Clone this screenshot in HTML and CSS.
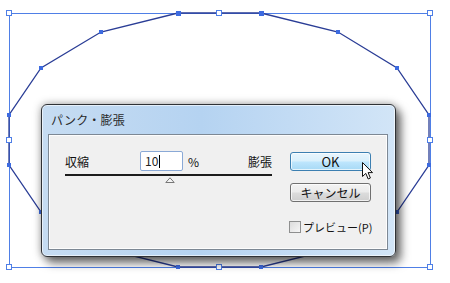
FILE: index.html
```html
<!DOCTYPE html>
<html>
<head>
	<title>パンク・膨張</title>
	<meta charset="utf-8">
	<link rel="stylesheet" href="styles.css">
</head>
<body>
<div class="canvas">
	<svg class="shape" width="450" height="283" viewBox="0 0 450 283">
		<rect x="9.5" y="13.5" width="421" height="254" fill="none" stroke="#4f7fe6" stroke-width="1"/>
		<polygon points="178,13 261,13 338,32 397,68 429,115 429,165 397,212 338,248 261,267 178,267 101,248 41,212 9,165 9,115 41,68 101,32" fill="none" stroke="#2a3d96" stroke-width="1.3"/>
		<g fill="#3d6be0">
			<rect x="176" y="11" width="5" height="5"/><rect x="259" y="11" width="5" height="5"/>
			<rect x="336" y="30" width="4" height="4"/><rect x="395" y="66" width="4" height="4"/>
			<rect x="427" y="113" width="4" height="4"/><rect x="427" y="163" width="4" height="4"/>
			<rect x="395" y="210" width="4" height="4"/><rect x="336" y="246" width="4" height="4"/>
			<rect x="259" y="265" width="4" height="4"/><rect x="176" y="265" width="4" height="4"/>
			<rect x="99" y="246" width="4" height="4"/><rect x="39" y="210" width="4" height="4"/>
			<rect x="7" y="163" width="4" height="4"/><rect x="7" y="113" width="4" height="4"/>
			<rect x="39" y="66" width="4" height="4"/><rect x="99" y="30" width="4" height="4"/>
		</g>
		<g fill="#fff" stroke="#4f7fe6" stroke-width="1">
			<rect x="6.5" y="10.5" width="5" height="5"/><rect x="216.5" y="10.5" width="5" height="5"/>
			<rect x="427.5" y="10.5" width="5" height="5"/><rect x="6.5" y="137.5" width="5" height="5"/>
			<rect x="427.5" y="137.5" width="5" height="5"/><rect x="6.5" y="264.5" width="5" height="5"/>
			<rect x="216.5" y="264.5" width="5" height="5"/><rect x="427.5" y="264.5" width="5" height="5"/>
		</g>
	</svg>

	<div class="dialog">
		<div class="title">パンク・膨張</div>
		<div class="panel">
			<div class="slider-area">
				<div class="value-row">
					<span class="label">収縮</span>
					<span class="input">10<span class="caret"></span></span>
					<span class="unit">%</span>
					<span class="label right">膨張</span>
				</div>
				<div class="track"></div>
				<svg class="thumb" width="10" height="6" viewBox="0 0 10 6">
					<polygon points="5,0.8 9.2,5.5 0.8,5.5" fill="#f4f4f4" stroke="#777" stroke-width="1"/>
				</svg>
			</div>
			<div class="buttons">
				<div class="btn ok">OK</div>
				<div class="btn">キャンセル</div>
				<label class="check"><span class="box"></span>プレビュー(P)</label>
			</div>
		</div>
	</div>

	<svg class="cursor" width="14" height="20" viewBox="0 0 14 20">
		<path d="M1.5 1.5 L1.5 15.5 L4.8 12.4 L7.2 18 L9.4 17 L7.1 11.6 L11.5 11.6 Z" fill="#fff" stroke="#111" stroke-width="1" stroke-linejoin="round"/>
	</svg>
</div>
</body>
</html>
```

FILE: styles.css
```css
*{
	margin: 0;
	padding: 0;
	box-sizing: border-box;
}
body{
	background: #fff;
	width: 450px;
	height: 283px;
	overflow: hidden;
	font-family: "Noto Sans CJK JP", "DejaVu Sans", sans-serif;
	font-size: 12px;
	color: #111;
}
.canvas{
	position: relative;
	width: 450px;
	height: 283px;
}
.shape{
	position: absolute;
	left: 0;
	top: 0;
}
/* ダイアログ本体 */
.dialog{
	position: absolute;
	left: 41px;
	top: 104px;
	width: 355px;
	height: 153px;
	border: 1px solid #2f3236;
	border-radius: 6px;
	background: linear-gradient(90deg, #c6dcf2 0%, #b5d3f1 45%, #c2dbf4 70%, #d2e5f7 100%);
	box-shadow: 5px 6px 10px rgba(0,0,0,0.55), 0 0 8px rgba(0,0,0,0.35), inset 0 0 0 1px rgba(255,255,255,0.6);
	padding: 0 7px 6px 6px;
	display: flex;
	flex-direction: column;
}
.title{
	height: 29px;
	line-height: 29px;
	padding-left: 3px;
	color: #2a2a2a;
	font-size: 12px;
	letter-spacing: 0.3px;
}
.panel{
	flex: 1;
	background: #f0f0f0;
	border: 1px solid #7d8894;
	box-shadow: inset 0 0 0 1px #fdfdfd;
	display: flex;
	padding: 16px 0 0 16px;
	gap: 18px;
}
.slider-area{
	width: 207px;
	position: relative;
}
.value-row{
	display: flex;
	align-items: center;
	height: 20px;
}
.label{
	width: 75px;
}
.label.right{
	width: auto;
	margin-left: auto;
}
.input{
	width: 43px;
	height: 20px;
	border: 1px solid #8aa9d6;
	border-radius: 2px;
	background: #fff;
	padding-left: 4px;
	line-height: 18px;
	color: #222;
	display: flex;
	align-items: center;
}
.caret{
	display: inline-block;
	width: 1px;
	height: 13px;
	background: #000;
	margin-left: 1px;
}
.unit{
	margin-left: 5px;
}
.track{
	margin-top: 3px;
	height: 2px;
	background: #1c1c1c;
}
.thumb{
	display: block;
	margin: 1px 0 0 100px;
}
.buttons{
	width: 81px;
	display: flex;
	flex-direction: column;
	padding-top: 1px;
}
.btn{
	height: 19px;
	border: 1px solid #707070;
	border-radius: 3px;
	text-align: center;
	line-height: 17px;
	background: linear-gradient(#f3f3f3 0%, #ebebeb 48%, #dcdcdc 52%, #cfcfcf 100%);
	box-shadow: inset 0 0 0 1px rgba(255,255,255,0.7);
	margin-bottom: 12px;
}
.btn.ok{
	border-color: #3c7fb1;
	background: linear-gradient(#e8f5fd 0%, #d9f0fc 48%, #bee6fd 52%, #a7d9f5 100%);
	font-size: 13px;
}
.check{
	display: flex;
	align-items: center;
	margin-top: 5px;
	margin-left: -1px;
	white-space: nowrap;
	font-size: 11px;
}
.box{
	flex-shrink: 0;
	width: 12px;
	height: 12px;
	border: 1px solid #8e8f8f;
	background: linear-gradient(135deg, #dcdcdc, #f6f6f6);
	margin-right: 2px;
}
.cursor{
	position: absolute;
	left: 361px;
	top: 161px;
}
```
